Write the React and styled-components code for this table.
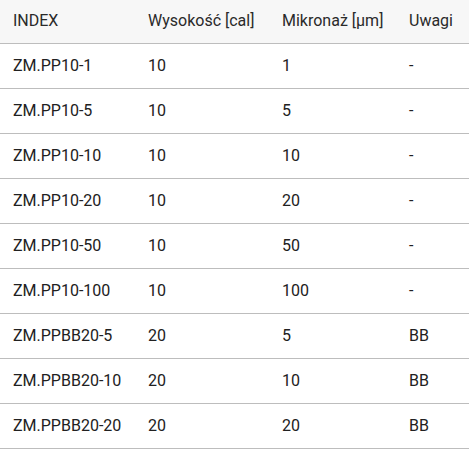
import React from "react";
import styled, { createGlobalStyle } from "styled-components";

const Global = createGlobalStyle`
  html, body { margin: 0; padding: 0; background: #fff; }
  body { font-family: Roboto, "Liberation Sans", sans-serif; }
`;

const Table = styled.table`
  width: 469px;
  border-collapse: collapse;
  table-layout: fixed;
  font-family: Roboto, "Liberation Sans", sans-serif;
  font-size: 16px;
  color: #212121;
`;

const HeadRow = styled.tr`
  background: #f7f7f7;
  border-bottom: 1px solid #bdbdbd;
`;

const Th = styled.th`
  height: 43px;
  padding: 0 0 2px 13px;
  text-align: left;
  font-weight: 400;
  color: #2a2a2a;
  box-sizing: border-box;
`;

const Row = styled.tr`
  border-bottom: 1px solid #bdbdbd;
`;

const Td = styled.td`
  height: 45px;
  padding: 0 0 0 13px;
  box-sizing: border-box;
`;

const cols = [135, 134, 127, 73];
const headers = ["INDEX", "Wysokość [cal]", "Mikronaż [µm]", "Uwagi"];
const rows = [
  ["ZM.PP10-1", "10", "1", "-"],
  ["ZM.PP10-5", "10", "5", "-"],
  ["ZM.PP10-10", "10", "10", "-"],
  ["ZM.PP10-20", "10", "20", "-"],
  ["ZM.PP10-50", "10", "50", "-"],
  ["ZM.PP10-100", "10", "100", "-"],
  ["ZM.PPBB20-5", "20", "5", "BB"],
  ["ZM.PPBB20-10", "20", "10", "BB"],
  ["ZM.PPBB20-20", "20", "20", "BB"],
];

export default function App() {
  return (
    <>
      <Global />
      <Table>
        <colgroup>
          {cols.map((w, i) => (
            <col key={i} style={{ width: w }} />
          ))}
        </colgroup>
        <thead>
          <HeadRow>
            {headers.map((h) => (
              <Th key={h}>{h}</Th>
            ))}
          </HeadRow>
        </thead>
        <tbody>
          {rows.map((r) => (
            <Row key={r[0]}>
              {r.map((c, i) => (
                <Td key={i}>{c}</Td>
              ))}
            </Row>
          ))}
        </tbody>
      </Table>
    </>
  );
}
